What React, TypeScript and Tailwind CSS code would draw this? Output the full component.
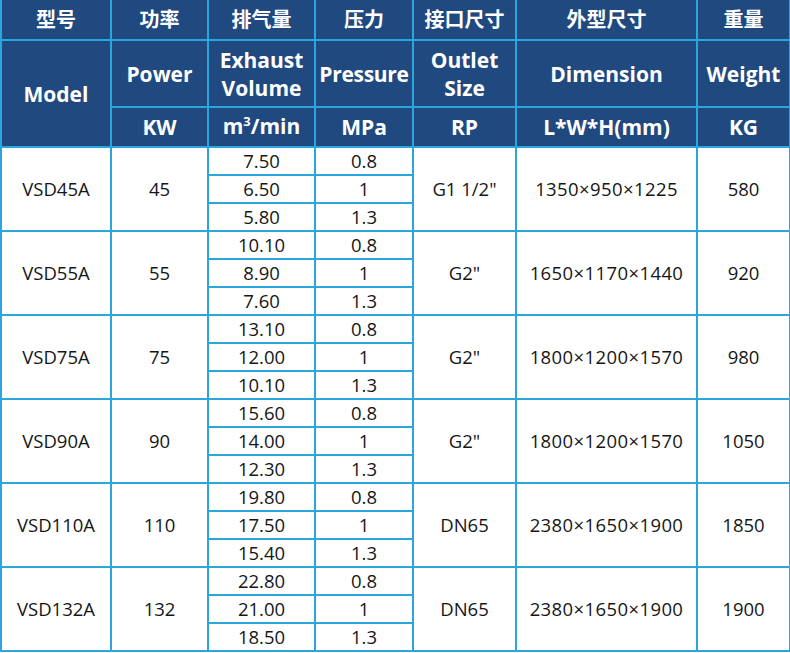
import React from 'react';

type Model = {
  name: string;
  power: string;
  flows: [string, string][]; // [volume, pressure]
  outlet: string;
  dim: string;
  weight: string;
};

const models: Model[] = [
  { name: 'VSD45A', power: '45', flows: [['7.50', '0.8'], ['6.50', '1'], ['5.80', '1.3']], outlet: 'G1 1/2"', dim: '1350×950×1225', weight: '580' },
  { name: 'VSD55A', power: '55', flows: [['10.10', '0.8'], ['8.90', '1'], ['7.60', '1.3']], outlet: 'G2"', dim: '1650×1170×1440', weight: '920' },
  { name: 'VSD75A', power: '75', flows: [['13.10', '0.8'], ['12.00', '1'], ['10.10', '1.3']], outlet: 'G2"', dim: '1800×1200×1570', weight: '980' },
  { name: 'VSD90A', power: '90', flows: [['15.60', '0.8'], ['14.00', '1'], ['12.30', '1.3']], outlet: 'G2"', dim: '1800×1200×1570', weight: '1050' },
  { name: 'VSD110A', power: '110', flows: [['19.80', '0.8'], ['17.50', '1'], ['15.40', '1.3']], outlet: 'DN65', dim: '2380×1650×1900', weight: '1850' },
  { name: 'VSD132A', power: '132', flows: [['22.80', '0.8'], ['21.00', '1'], ['18.50', '1.3']], outlet: 'DN65', dim: '2380×1650×1900', weight: '1900' },
];

const th = 'border-2 border-[#2aa5de] bg-[#204a7f] text-white font-bold text-center align-middle p-0 whitespace-nowrap';
const td = 'border-2 border-[#2aa5de] text-center align-middle p-0 whitespace-nowrap';

export default function App() {
  return (
    <div className="w-[790px] h-[653px] bg-white overflow-hidden">
      <table
        className="w-[789px] table-fixed border-collapse text-[#161616]"
        style={{ fontFamily: '"Open Sans", "Noto Sans CJK SC", sans-serif' }}
      >
        <colgroup>
          <col className="w-[110px]" />
          <col className="w-[97px]" />
          <col className="w-[107px]" />
          <col className="w-[98px]" />
          <col className="w-[103px]" />
          <col className="w-[181px]" />
          <col className="w-[93px]" />
        </colgroup>
        <thead className="text-[21px] leading-[28px]">
          {/* chinese titles */}
          <tr className="h-[40px] text-[20px]">
            <th className={th + ' border-t-0'}>型号</th>
            <th className={th + ' border-t-0'}>功率</th>
            <th className={th + ' border-t-0'}>排气量</th>
            <th className={th + ' border-t-0'}>压力</th>
            <th className={th + ' border-t-0'}>接口尺寸</th>
            <th className={th + ' border-t-0'}>外型尺寸</th>
            <th className={th + ' border-t-0'}>重量</th>
          </tr>
          <tr className="h-[67px]">
            <th rowSpan={2} className={th}>Model</th>
            <th className={th}>Power</th>
            <th className={th}>Exhaust<br />Volume</th>
            <th className={th + ' tracking-[-0.3px]'}>Pressure</th>
            <th className={th}>Outlet<br />Size</th>
            <th className={th}>Dimension</th>
            <th className={th}>Weight</th>
          </tr>
          <tr className="h-[40px]">
            <th className={th}>KW</th>
            <th className={th}>
              m<span className="relative -top-[8px] text-[13px]">3</span>/min
            </th>
            <th className={th}>MPa</th>
            <th className={th}>RP</th>
            <th className={th}>L*W*H(mm)</th>
            <th className={th}>KG</th>
          </tr>
        </thead>
        <tbody className="text-[18.5px] leading-[24px]">
          {models.map((m) =>
            m.flows.map(([vol, pres], i) => (
              <tr key={m.name + i} className="h-[28px]">
                {i === 0 && (
                  <>
                    <td rowSpan={3} className={td}>{m.name}</td>
                    <td rowSpan={3} className={td}>{m.power}</td>
                  </>
                )}
                <td className={td}>{vol}</td>
                <td className={td}>{pres}</td>
                {i === 0 && (
                  <>
                    <td rowSpan={3} className={td}>{m.outlet}</td>
                    <td rowSpan={3} className={td + ' tracking-[0.4px]'}>{m.dim}</td>
                    <td rowSpan={3} className={td}>{m.weight}</td>
                  </>
                )}
              </tr>
            ))
          )}
        </tbody>
      </table>
    </div>
  );
}
